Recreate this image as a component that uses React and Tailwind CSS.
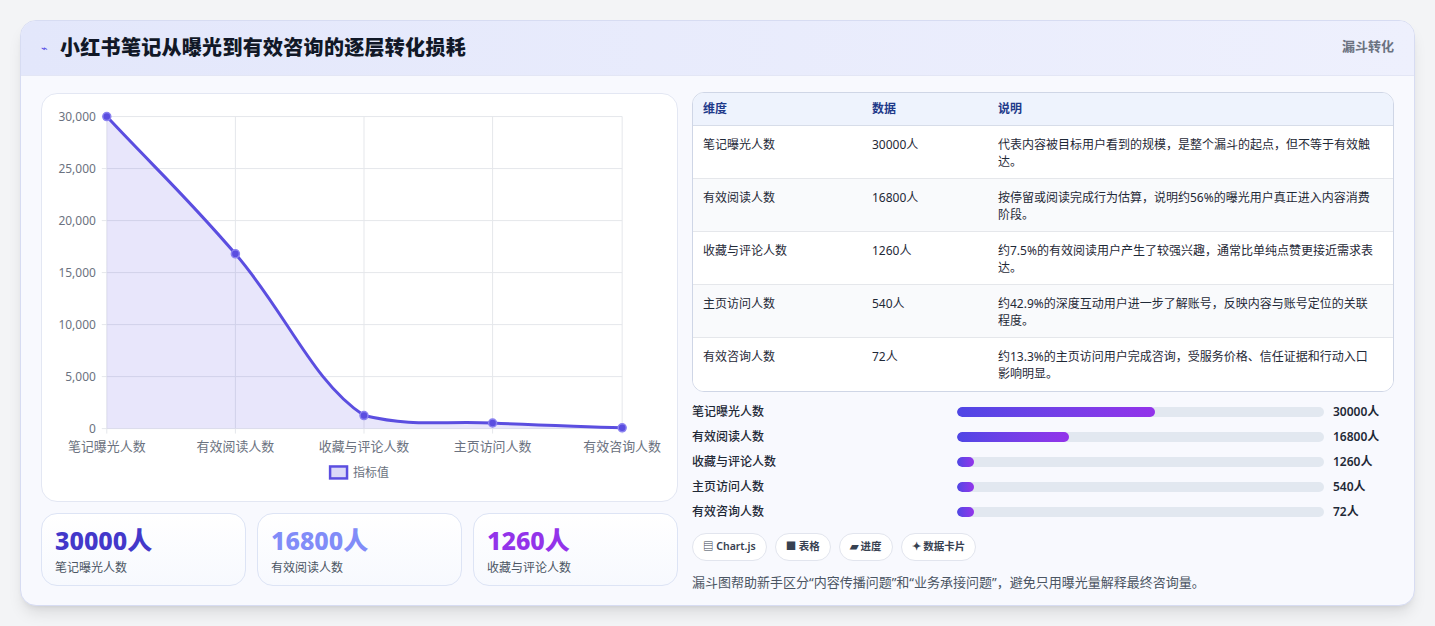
import React from "react";

const F = { fontFamily: '"Noto Sans", "Noto Sans CJK SC", sans-serif' };

const rows = [
  ["笔记曝光人数", "30000人", "代表内容被目标用户看到的规模，是整个漏斗的起点，但不等于有效触达。"],
  ["有效阅读人数", "16800人", "按停留或阅读完成行为估算，说明约56%的曝光用户真正进入内容消费阶段。"],
  ["收藏与评论人数", "1260人", "约7.5%的有效阅读用户产生了较强兴趣，通常比单纯点赞更接近需求表达。"],
  ["主页访问人数", "540人", "约42.9%的深度互动用户进一步了解账号，反映内容与账号定位的关联程度。"],
  ["有效咨询人数", "72人", "约13.3%的主页访问用户完成咨询，受服务价格、信任证据和行动入口影响明显。"],
];
const bars = [
  ["笔记曝光人数", "30000人", "w-[54%]"],
  ["有效阅读人数", "16800人", "w-[30.5%]"],
  ["收藏与评论人数", "1260人", "w-[4.5%]"],
  ["主页访问人数", "540人", "w-[4.5%]"],
  ["有效咨询人数", "72人", "w-[4.5%]"],
];

const xs = [65, 194, 323, 452, 582];
const ys = [22, 159.7, 321.9, 329.4, 334.2];
const labels = ["笔记曝光人数", "有效阅读人数", "收藏与评论人数", "主页访问人数", "有效咨询人数"];

function curve() {
  let d = `M${xs[0]},${ys[0]}`;
  for (let i = 0; i < 4; i++) {
    const dx = (xs[i + 1] - xs[i]) * 0.4;
    const s0 = i === 0 ? (ys[1] - ys[0]) / 129 : (ys[i + 1] - ys[i - 1]) / 258;
    const s1 = i === 3 ? (ys[4] - ys[3]) / 129 : (ys[i + 2] - ys[i]) / 258;
    const a = Math.min(Math.abs(s0), 2) * Math.sign(s0);
    const b = Math.min(Math.abs(s1), 2) * Math.sign(s1);
    const c1 = Math.min(ys[i] + a * dx, 334);
    const c2 = Math.min(ys[i + 1] - b * dx, 334);
    d += ` C${xs[i] + dx},${c1} ${xs[i + 1] - dx},${c2} ${xs[i + 1]},${ys[i + 1]}`;
  }
  return d;
}

function Chart() {
  const d = curve();
  return (
    <svg viewBox="0 0 637 407" className="w-full h-full">
      {[0, 1, 2, 3, 4, 5, 6].map((i) => {
        const y = 22 + i * 52.17;
        return (
          <g key={i}>
            <line x1="60" x2="582" y1={y} y2={y} stroke="#e5e7eb" />
            <text x="54" y={y + 4} textAnchor="end" fontSize="12" fill="#6b7280">
              {(30000 - i * 5000).toLocaleString("en-US")}
            </text>
          </g>
        );
      })}
      {xs.map((x, i) => (
        <g key={i}>
          <line x1={x} x2={x} y1="22" y2="340" stroke="#e5e7eb" />
          <text x={x} y="357" textAnchor="middle" fontSize="13" fill="#6b7280">{labels[i]}</text>
        </g>
      ))}
      <path d={`${d} L582,335 L65,335 Z`} fill="rgba(99,86,230,0.15)" />
      <path d={d} fill="none" stroke="#5b4ee0" strokeWidth="3" />
      {xs.map((x, i) => (
        <circle key={i} cx={x} cy={ys[i]} r="4" fill="#5b4ee0" stroke="#8b82f0" strokeWidth="1.5" />
      ))}
      <rect x="289" y="373" width="17" height="12" fill="#dcd9f8" stroke="#5b4ee0" strokeWidth="2.5" />
      <text x="312" y="384" fontSize="12" fill="#6b7280">指标值</text>
    </svg>
  );
}

export default function App() {
  return (
    <div className="w-[1435px] h-[626px] bg-[#f3f4f6] px-5 pt-5" style={F}>
      <div className="h-[586px] rounded-2xl border border-[#d7dcf2] bg-[#f8f9fe] shadow-lg overflow-hidden">
        <div className="h-[55px] flex items-center justify-between px-5 bg-gradient-to-r from-[#e3e7fb] to-[#eef0fd] border-b border-[#e3e6f5]">
          <div className="flex items-center gap-3">
            <span className="text-[11px] text-[#4f46e5]">⌁</span>
            <h1 className="text-[20px] font-extrabold text-[#111827] tracking-[0.3px]">小红书笔记从曝光到有效咨询的逐层转化损耗</h1>
          </div>
          <span className="text-[13px] font-semibold text-[#6b7280] self-start mt-4">漏斗转化</span>
        </div>
        <div className="flex gap-[14px] px-5 pt-[17px]">
          <div className="w-[637px] shrink-0 flex flex-col gap-[11px]">
            <div className="h-[409px] bg-white rounded-2xl border border-[#e3e7f3]">
              <Chart />
            </div>
            <div className="grid grid-cols-3 gap-[11px]">
              {[["30000人", "text-[#4338ca]", "笔记曝光人数"], ["16800人", "text-[#818cf8]", "有效阅读人数"], ["1260人", "text-[#9333ea]", "收藏与评论人数"]].map(([v, c, l]) => (
                <div key={l} className="h-[73px] rounded-2xl border border-[#dde4f5] bg-gradient-to-b from-white to-[#f7f9fe] px-[13px] pt-[10px]">
                  <div className={`text-[25px] font-extrabold leading-8 ${c}`}>{v}</div>
                  <div className="text-[12px] text-[#4b5563] mt-[3px]">{l}</div>
                </div>
              ))}
            </div>
          </div>
          <div className="flex-1 -mt-[1px]">
            <div className="rounded-xl border border-[#cfd6e6] overflow-hidden bg-white">
              <div className="flex h-[33px] items-center bg-[#eef3fd] text-[12px] font-semibold text-[#1e3a8a] border-b border-[#d7dde9]">
                <div className="w-[179px] shrink-0 pl-[10px]">维度</div>
                <div className="w-[126px] shrink-0">数据</div>
                <div>说明</div>
              </div>
              {rows.map((r, i) => (
                <div key={i} className={`flex h-[53px] pt-[10px] text-[12px] text-[#1f2937] ${i < 4 ? "border-b border-[#e5e7eb]" : ""} ${i % 2 ? "bg-[#f9fafc]" : "bg-white"}`}>
                  <div className="w-[179px] shrink-0 pl-[10px]">{r[0]}</div>
                  <div className="w-[126px] shrink-0">{r[1]}</div>
                  <div className="flex-1 pr-4 leading-[17px]">{r[2]}</div>
                </div>
              ))}
            </div>
            <div className="mt-[11px] flex flex-col gap-[7px]">
              {bars.map(([l, v, w]) => (
                <div key={l} className="flex items-center h-[18px] text-[12px] font-medium text-[#1f2937]">
                  <div className="w-[265px] shrink-0">{l}</div>
                  <div className="w-[367px] shrink-0 h-[10px] rounded-full bg-[#e2e8f0] overflow-hidden">
                    <div className={`h-full rounded-full bg-gradient-to-r from-[#4f46e5] to-[#9333ea] ${w}`} />
                  </div>
                  <div className="ml-[9px] font-semibold">{v}</div>
                </div>
              ))}
            </div>
            <div className="flex gap-[8px] mt-[12px]">
              {["▤ Chart.js", "■ 表格", "▰ 进度", "✦ 数据卡片"].map((t) => (
                <span key={t} className="h-[28px] px-[10px] flex items-center rounded-full border border-[#e2e5ee] bg-white text-[10.5px] font-semibold text-[#374151]">{t}</span>
              ))}
            </div>
            <p className="mt-[12px] text-[13px] text-[#4b5563]">漏斗图帮助新手区分“内容传播问题”和“业务承接问题”，避免只用曝光量解释最终咨询量。</p>
          </div>
        </div>
      </div>
    </div>
  );
}
